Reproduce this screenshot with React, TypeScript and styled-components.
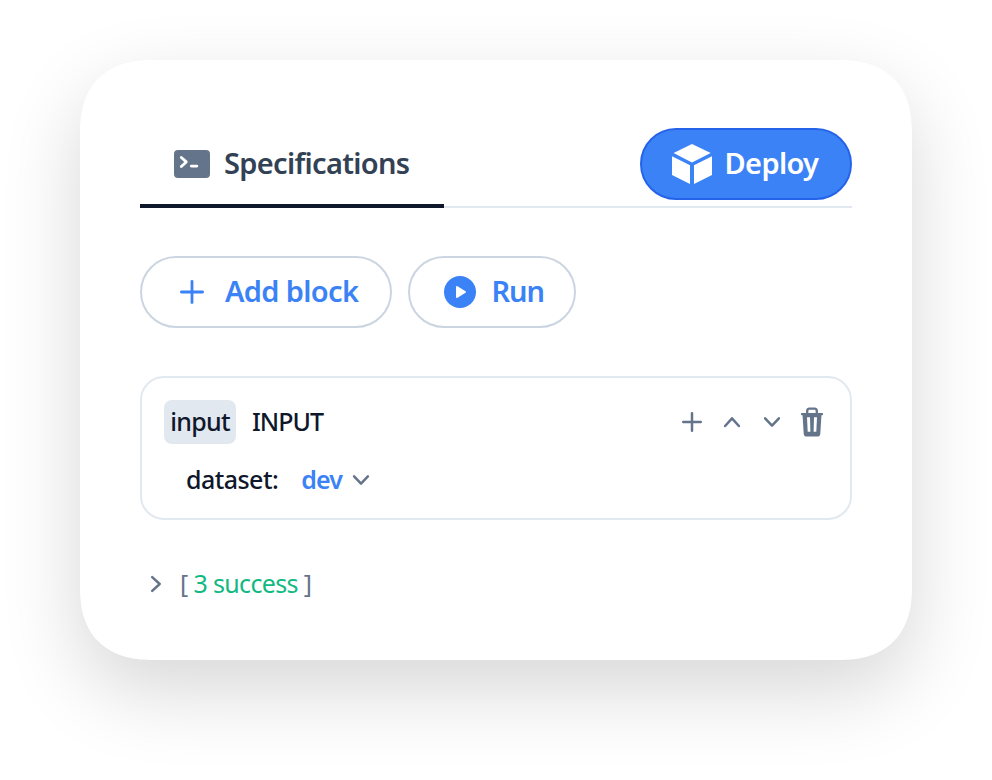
import React from 'react';
import styled, { createGlobalStyle, css } from 'styled-components';

const colors = {
  blue: '#3b82f6',
  blueDark: '#2563eb',
  slate200: '#e2e8f0',
  slate300: '#cbd5e1',
  slate500: '#64748b',
  slate700: '#334155',
  slate900: '#0f172a',
  green: '#10b981',
};

const GlobalStyle = createGlobalStyle`
  *, *::before, *::after { box-sizing: border-box; }
  body {
    margin: 0;
    background: #fff;
    font-family: 'Noto Sans', 'Open Sans', sans-serif;
  }
  button { font: inherit; letter-spacing: inherit; margin: 0; background: none; cursor: pointer; }
  svg { display: block; flex: none; }
`;

const Page = styled.main`
  width: 992px;
  height: 780px;
  padding: 60px 80px;
  overflow: hidden;
`;

const Card = styled.section`
  width: 832px;
  height: 600px;
  padding: 60px;
  background: #fff;
  border-radius: 73px;
  corner-shape: superellipse(1.25);
  box-shadow: 0 30px 80px rgba(0, 0, 0, 0.16);
`;

const Header = styled.header`
  display: flex;
  justify-content: space-between;
  align-items: flex-start;
  height: 88px;
  box-shadow: inset 0 -2px ${colors.slate200};
`;

const Tab = styled.button`
  display: flex;
  align-items: center;
  gap: 14px;
  width: 304px;
  height: 88px;
  padding: 4px 0 0 34px;
  border: 0;
  border-bottom: 4px solid ${colors.slate900};
  color: ${colors.slate700};
`;

const Label = styled.span<{ $spacing: number }>`
  padding-bottom: 2px;
  font-size: 29px;
  font-weight: 640;
  line-height: 38px;
  letter-spacing: ${p => p.$spacing}px;
  white-space: nowrap;
`;

const PillButton = styled.button<{ $primary?: boolean; $width: number; $gap: number; $inset: number }>`
  display: flex;
  align-items: center;
  gap: ${p => p.$gap}px;
  width: ${p => p.$width}px;
  height: 72px;
  padding: 0 0 0 ${p => p.$inset}px;
  border: 2px solid ${colors.slate300};
  border-radius: 36px;
  color: ${colors.blue};
  ${p => p.$primary && css`
    margin-top: 8px;
    color: #fff;
    background: ${colors.blue};
    border-color: ${colors.blueDark};
  `}
`;

const Toolbar = styled.div`
  display: flex;
  gap: 16px;
  margin-top: 48px;
`;

const Block = styled.article`
  height: 144px;
  margin-top: 48px;
  padding: 22px;
  border: 2px solid ${colors.slate200};
  border-radius: 24px;
  color: ${colors.slate900};
  font-size: 25px;
  font-weight: 540;
  letter-spacing: -0.55px;
  line-height: 42px;
`;

const BlockHeader = styled.div`
  display: flex;
  align-items: flex-start;
  height: 44px;
`;

const Tag = styled.span`
  width: 72px;
  height: 44px;
  border-radius: 8px;
  background: ${colors.slate200};
  letter-spacing: -0.75px;
  text-align: center;
`;

const BlockName = styled.span`
  margin-left: 16px;
  letter-spacing: -1px;
`;

const Actions = styled.div`
  display: flex;
  margin: 2px -4px 0 auto;
`;

const IconButton = styled.button`
  display: grid;
  place-items: center;
  width: 40px;
  height: 40px;
  padding: 0;
  border: 0;
  color: ${colors.slate500};
`;

const Field = styled.div`
  display: flex;
  align-items: center;
  height: 44px;
  margin-top: 14px;
  padding-left: 22px;
`;

const FieldText = styled.span`
  padding-bottom: 2px;
`;

const FieldValue = styled.button`
  display: flex;
  align-items: center;
  gap: 9px;
  margin-left: 23px;
  padding: 0;
  border: 0;
  color: ${colors.blue};
  font-weight: 620;
  letter-spacing: -0.8px;
  svg { color: ${colors.slate500}; }
`;

const Result = styled.div`
  display: flex;
  align-items: center;
  gap: 14px;
  height: 40px;
  margin-top: 44px;
  padding-left: 6px;
  color: ${colors.slate500};
  font-size: 25px;
  letter-spacing: -0.65px;
`;

const ResultText = styled.span`
  padding-bottom: 3px;
  line-height: 34px;
`;

const Success = styled.span`
  color: ${colors.green};
`;

const stroke = { fill: 'none', stroke: 'currentColor', strokeLinecap: 'round', strokeLinejoin: 'round' } as const;

const TerminalIcon = () => (
  <svg width="36" height="28" viewBox="0 0 36 28">
    <rect width="36" height="28" rx="4" fill={colors.slate500} />
    <path d="M7.3 7.5l5 4.4-5 4.7M17.3 16.1h5.6" {...stroke} stroke="#fff" strokeWidth="2.8" />
  </svg>
);

const CubeIcon = () => (
  <svg width="40" height="40" viewBox="0 0 40 40" fill="currentColor">
    <path d="M20 0l18.7 9.1L20 18.5 1.6 9.1z" />
    <path d="M0 12.3l18 9V40L0 31z" />
    <path d="M40 12.3l-18 9V40l18-9z" />
  </svg>
);

const PlusIcon = ({ size, weight }: { size: number; weight: number }) => (
  <svg width={size} height={size} viewBox={`0 0 ${size} ${size}`}>
    <path d={`M${size / 2} ${weight / 2}V${size - weight / 2}M${weight / 2} ${size / 2}H${size - weight / 2}`} {...stroke} strokeWidth={weight} />
  </svg>
);

const PlayIcon = () => (
  <svg width="32" height="32" viewBox="0 0 32 32">
    <circle cx="16" cy="16" r="16" fill="currentColor" />
    <path d="M13 11l8 5-8 5z" fill="#fff" stroke="#fff" strokeWidth="2" strokeLinejoin="round" />
  </svg>
);

const chevrons = {
  up: 'M3.1 14l6.9-7.7 6.9 7.7',
  down: 'M3.1 6.3l6.9 7.3 6.9-7.3',
  right: 'M6.2 3.1l7.5 6.9-7.5 6.9',
};

const Chevron = ({ direction }: { direction: keyof typeof chevrons }) => (
  <svg width="20" height="20" viewBox="0 0 20 20">
    <path d={chevrons[direction]} {...stroke} strokeWidth="2.5" />
  </svg>
);

const TrashIcon = () => (
  <svg width="24" height="30" viewBox="0 0 24 30">
    <path d="M7.2 7V4.2c0-1.5.8-2.6 2.2-2.6h5.2c1.4 0 2.2 1.1 2.2 2.6V7M2 7.2h20" {...stroke} strokeWidth="2.3" />
    <path
      fillRule="evenodd"
      fill="currentColor"
      d="M2.5 7.2h19l-1.2 19.2c-.2 2.2-1.3 3.2-3.2 3.2H6.9c-1.9 0-3-1-3.2-3.2zM7 10.2l.7 14.6h2.7L10 10.2zM14 10.2l-.4 14.6h2.7l.7-14.6z"
    />
  </svg>
);

export default function App() {
  return (
    <>
      <GlobalStyle />
      <Page>
        <Card>
          <Header>
            <Tab>
              <TerminalIcon />
              <Label $spacing={-0.68}>Specifications</Label>
            </Tab>
            <PillButton $primary $width={212} $gap={12.5} $inset={30}>
              <CubeIcon />
              <Label $spacing={-0.65}>Deploy</Label>
            </PillButton>
          </Header>
          <Toolbar>
            <PillButton $width={252} $gap={21} $inset={38}>
              <PlusIcon size={24} weight={2.8} />
              <Label $spacing={-0.65}>Add block</Label>
            </PillButton>
            <PillButton $width={168} $gap={15.5} $inset={34}>
              <PlayIcon />
              <Label $spacing={-1.1}>Run</Label>
            </PillButton>
          </Toolbar>
          <Block>
            <BlockHeader>
              <Tag>input</Tag>
              <BlockName>INPUT</BlockName>
              <Actions>
                <IconButton aria-label="Add"><PlusIcon size={20} weight={2.5} /></IconButton>
                <IconButton aria-label="Move up"><Chevron direction="up" /></IconButton>
                <IconButton aria-label="Move down"><Chevron direction="down" /></IconButton>
                <IconButton aria-label="Delete"><TrashIcon /></IconButton>
              </Actions>
            </BlockHeader>
            <Field>
              <FieldText>dataset:</FieldText>
              <FieldValue>
                <FieldText>dev</FieldText>
                <Chevron direction="down" />
              </FieldValue>
            </Field>
          </Block>
          <Result>
            <Chevron direction="right" />
            <ResultText>[ <Success>3 success</Success> ]</ResultText>
          </Result>
        </Card>
      </Page>
    </>
  );
}
